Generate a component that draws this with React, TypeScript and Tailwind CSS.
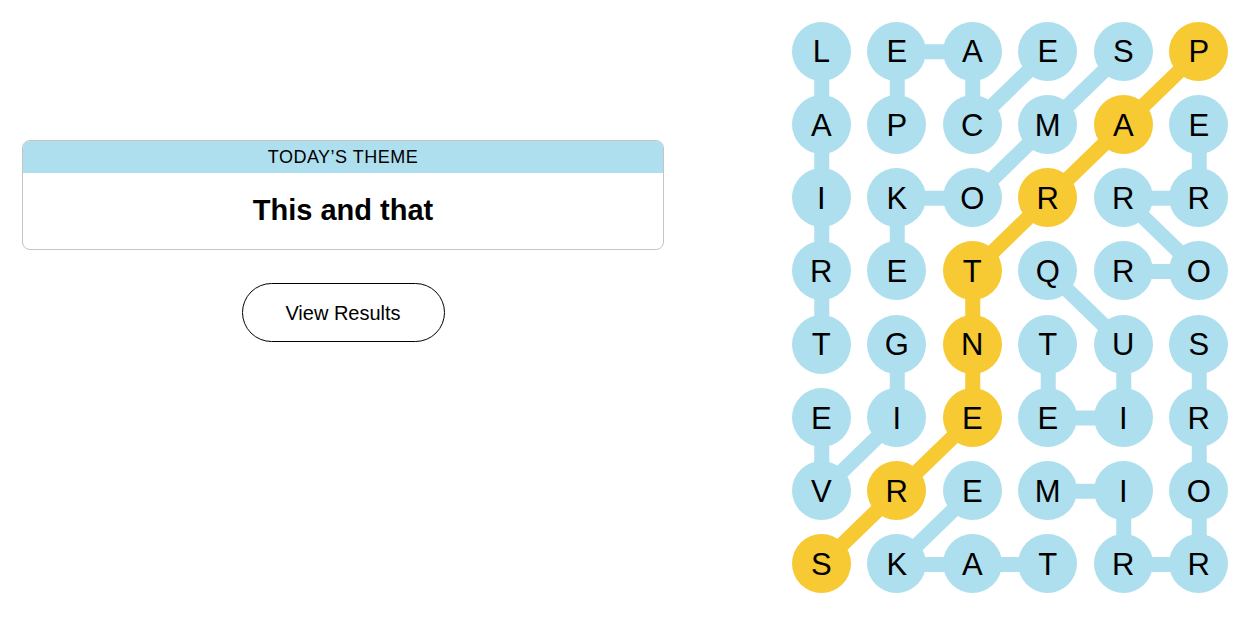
import React from "react";

const GRID = [
  "LEAESP",
  "APCMAE",
  "IKORRR",
  "RETQRO",
  "TGNTUS",
  "EIEEIR",
  "VREMIO",
  "SKATRR"
];

const CELL_W = 75.5;
const CELL_H = 73.25;

type Cell = [number, number];

// found words, as paths through the board
const WORDS: Cell[][] = [
  [[4, 0], [3, 0], [2, 0], [1, 0], [0, 0]],
  [[4, 1], [5, 1], [6, 0], [5, 0]],
  [[1, 1], [0, 1], [0, 2], [1, 2], [0, 3]],
  [[0, 4], [1, 3], [2, 2], [2, 1], [3, 1]],
  [[1, 5], [2, 5], [2, 4], [3, 5], [3, 4]],
  [[3, 3], [4, 4], [5, 4], [5, 3], [4, 3]],
  [[6, 3], [6, 4], [7, 4], [7, 5], [6, 5], [5, 5], [4, 5]],
  [[7, 3], [7, 2], [7, 1], [6, 2]]
];

const SPANGRAM: Cell[] = [
  [0, 5], [1, 4], [2, 3], [3, 2], [4, 2], [5, 2], [6, 1], [7, 0]
];

const BLUE = "#aedfee";
const YELLOW = "#f7c932";

const toPoints = (path: Cell[]) =>
  path
    .map(([r, c]) => `${(c + 0.5) * CELL_W},${(r + 0.5) * CELL_H}`)
    .join(" ");

const isSpangram = (r: number, c: number) =>
  SPANGRAM.some(([sr, sc]) => sr === r && sc === c);

const Board = () => {
  return (
    <div className="relative mt-[14.6px] ml-[119.5px]">
      <svg
        className="absolute inset-0"
        width={CELL_W * 6}
        height={CELL_H * 8}
      >
        {WORDS.map((w, i) => (
          <polyline
            key={i}
            points={toPoints(w)}
            fill="none"
            stroke={BLUE}
            strokeWidth={15}
            strokeLinejoin="round"
          />
        ))}
        <polyline
          points={toPoints(SPANGRAM)}
          fill="none"
          stroke={YELLOW}
          strokeWidth={15}
          strokeLinejoin="round"
        />
      </svg>
      <div className="relative grid grid-cols-[repeat(6,75.5px)] grid-rows-[repeat(8,73.25px)]">
        {GRID.map((row, r) =>
          row.split("").map((ch, c) => (
            <div key={`${r}-${c}`} className="flex items-center justify-center">
              <div
                className={
                  isSpangram(r, c)
                    ? "flex size-[59px] items-center justify-center rounded-full bg-[#f7c932] pt-[3px] text-[31px] text-black"
                    : "flex size-[59px] items-center justify-center rounded-full bg-[#aedfee] pt-[3px] text-[31px] text-black"
                }
              >
                {ch}
              </div>
            </div>
          ))
        )}
      </div>
    </div>
  );
};

export default function App() {
  return (
    <div className="flex h-[628px] w-[1250px] bg-white pl-[22px] font-['Liberation_Sans',sans-serif] text-black">
      <div className="mt-[140px] flex w-[642px] flex-col items-center">
        <div className="w-full overflow-hidden rounded-lg border border-[#c4c4c4]">
          <div className="flex h-[32px] items-center justify-center bg-[#aedfee] text-[18px] tracking-[0.5px] uppercase">
            Today’s Theme
          </div>
          <div className="flex h-[76px] items-center justify-center text-[29px] font-bold">
            This and that
          </div>
        </div>
        <button className="mt-[33px] h-[59px] w-[203px] rounded-full border border-black bg-white text-[20px] text-black">
          View Results
        </button>
      </div>
      <Board />
    </div>
  );
}
